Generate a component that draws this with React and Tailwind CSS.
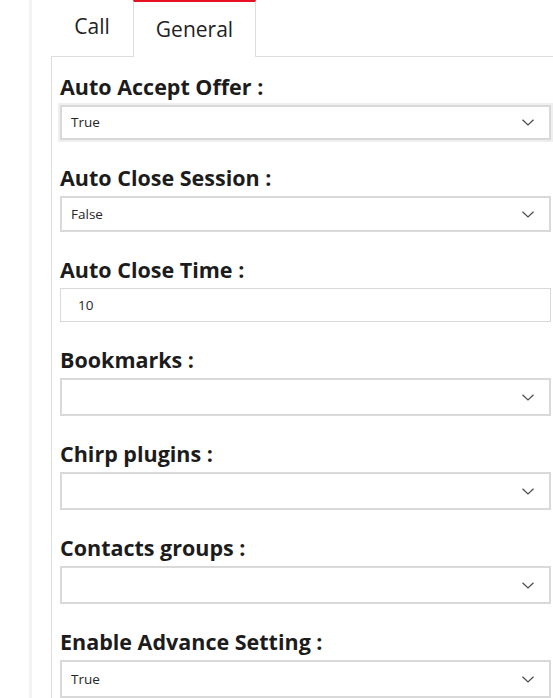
import React from 'react';

const Chevron = () => (
  <svg width="12" height="7" viewBox="0 0 12 7" className="shrink-0">
    <polyline points="0.5,0.8 6,6 11.5,0.8" fill="none" stroke="#4a4a4a" strokeWidth="1.2" />
  </svg>
);

const SelectBox = ({ value, height, focused }) => (
  <div
    className={`flex items-center justify-between pl-[9px] pr-[15px] border-2 border-[#d9d9d9] bg-white text-[13.5px] text-[#262626] ${
      focused ? 'shadow-[0_0_0_2px_#efefef]' : ''
    } ${height}`}
  >
    <span>{value}</span>
    <Chevron />
  </div>
);

const Field = ({ label, children }) => (
  <div className="flex flex-col">
    <label className="text-[21.5px] leading-[28px] font-bold text-[#1c1c1c] mb-[4px]">{label}</label>
    {children}
  </div>
);

const App = () => {
  return (
    <div className="w-[553px] h-[698px] overflow-hidden bg-white flex" style={{ fontFamily: '"Open Sans", "Noto Sans", sans-serif' }}>
      {/* left strip */}
      <div className="w-[29px] shrink-0" />
      <div className="w-[3px] shrink-0 bg-[#f3f3f3]" />
      <div className="w-[19px] shrink-0" />

      <div className="flex flex-col w-[508px] shrink-0">
        {/* Tabs */}
        <div className="flex h-[57px] shrink-0">
          <div className="w-[82px] border-b border-[#dddddd] flex justify-center pt-[11px] text-[21px] text-[#222]">
            Call
          </div>
          <div className="w-[123px] border-t-2 border-t-[#e81123] border-x border-x-[#dddddd] flex justify-center pt-[12px] text-[21px] text-[#222]">
            General
          </div>
          <div className="flex-1 border-b border-[#dddddd]" />
        </div>

        {/* Panel */}
        <div className="flex-1 border-l border-[#dddddd] pl-[8px] pr-[8px] pt-[16px] flex flex-col gap-[24px]">
          <Field label="Auto Accept Offer :">
            <SelectBox value="True" height="h-[35px]" focused />
          </Field>
          <Field label="Auto Close Session :">
            <SelectBox value="False" height="h-[36px]" />
          </Field>
          <Field label="Auto Close Time :">
            <div className="h-[34px] border border-[#d9d9d9] flex items-center pl-[17px] text-[13.5px] text-[#262626]">10</div>
          </Field>
          <Field label="Bookmarks :">
            <SelectBox value="" height="h-[38px]" />
          </Field>
          <Field label="Chirp plugins :">
            <SelectBox value="" height="h-[38px]" />
          </Field>
          <Field label="Contacts groups :">
            <SelectBox value="" height="h-[38px]" />
          </Field>
          <Field label="Enable Advance Setting :">
            <SelectBox value="True" height="h-[38px]" />
          </Field>
        </div>
      </div>
    </div>
  );
};

export default App;
